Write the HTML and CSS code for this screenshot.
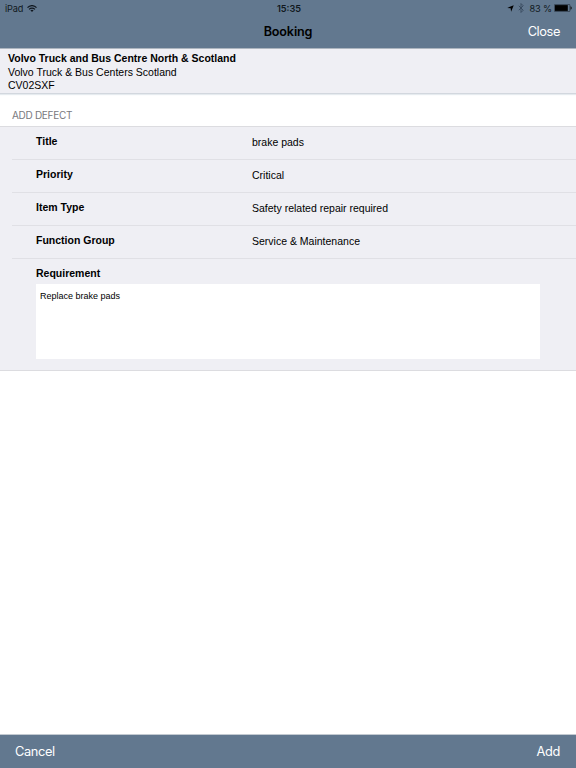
FILE: index.html
```html
<!DOCTYPE html>
<html lang="en">
<head>
    <meta charset="UTF-8">
    <meta name="viewport" content="width=device-width, initial-scale=1.0">
    <title>Booking</title>
    <link rel="stylesheet" href="styles.css">
</head>
<body>
    <header class="top">
        <div class="status-bar">
            <div class="status-left">
                <span>iPad</span>
                <svg class="wifi" viewBox="0 0 20 14" fill="none" stroke="#111820" stroke-width="2.4">
                    <path d="M1 5.2C6-.2 14-.2 19 5.2"/>
                    <path d="M4.2 8.6c3.3-3.4 8.3-3.4 11.6 0"/>
                    <path d="M10 13.8L6.7 10.6c1.9-1.8 4.7-1.8 6.6 0z" fill="#111820" stroke="none"/>
                </svg>
            </div>
            <span class="clock">15:35</span>
            <div class="status-right">
                <svg class="location" viewBox="0 0 14 14"><path d="M13.5.5L8.2 13.5 7.3 6.7.5 5.8z" fill="#000"/></svg>
                <svg class="bluetooth" viewBox="0 0 10 18" fill="none" stroke="#35465a" stroke-width="1.5"><path d="M1 5l8 8-4 4V1l4 4-8 8"/></svg>
                <span class="percent">83 %</span>
                <svg class="battery" viewBox="0 0 36 16">
                    <rect x=".8" y=".8" width="31" height="14.4" rx="1.5" fill="none" stroke="#26323f" stroke-width="1.4"/>
                    <rect x="2" y="2.2" width="25.6" height="11.6" fill="#000"/>
                    <path d="M33 4.5v7c3.4-1 3.4-6 0-7z" fill="#111"/>
                </svg>
            </div>
        </div>
        <nav class="nav-bar">
            <span class="nav-title">Booking</span>
            <a class="nav-close">Close</a>
        </nav>
    </header>

    <section class="dealer">
        <div class="dealer-name">Volvo Truck and Bus Centre North &amp; Scotland</div>
        <div class="dealer-branch">Volvo Truck &amp; Bus Centers Scotland</div>
        <div class="dealer-reg">CV02SXF</div>
    </section>

    <main class="content">
        <h2 class="section-title">ADD DEFECT</h2>
        <div class="form">
            <div class="row">
                <span class="label">Title</span>
                <span class="value">brake pads</span>
            </div>
            <div class="row">
                <span class="label">Priority</span>
                <span class="value">Critical</span>
            </div>
            <div class="row">
                <span class="label">Item Type</span>
                <span class="value">Safety related repair required</span>
            </div>
            <div class="row">
                <span class="label">Function Group</span>
                <span class="value">Service &amp; Maintenance</span>
            </div>
            <div class="requirement">
                <span class="label">Requirement</span>
                <div class="note">Replace brake pads</div>
            </div>
        </div>
    </main>

    <footer class="toolbar">
        <a class="cancel">Cancel</a>
        <a class="add">Add</a>
    </footer>
</body>
</html>
```

FILE: styles.css
```css
* {
    box-sizing: border-box;
}

body {
    margin: 0;
    height: 100vh;
    display: flex;
    flex-direction: column;
    overflow: hidden;
    background: #fff;
    color: #000;
    font-family: "Liberation Sans", Arial, sans-serif;
    font-size: 10.5px;
}

.top {
    height: 49px;
    background: #62788f;
    border-bottom: 1px solid #adb5bf;
}

.status-bar {
    display: grid;
    grid-template-columns: 1fr auto 1fr;
    align-items: center;
    height: 16px;
    padding: 0 4px 0 5px;
    font-family: Inter, sans-serif;
    font-size: 9.2px;
    line-height: 11px;
    color: #111820;
}

.status-left,
.status-right {
    display: flex;
    align-items: center;
}

.status-left {
    letter-spacing: -0.15px;
}

.status-right {
    justify-content: flex-end;
}

.wifi {
    width: 10px;
    height: 7px;
    margin-left: 4px;
}

.clock {
    margin-left: 1px;
    font-weight: 600;
}

.location {
    width: 7px;
    height: 7px;
}

.bluetooth {
    width: 6px;
    height: 10px;
    margin: 0 5px 0 4px;
}

.percent {
    letter-spacing: -0.1px;
}

.battery {
    width: 18px;
    height: 8px;
    margin-left: 2px;
}

.nav-bar {
    display: grid;
    grid-template-columns: 1fr auto 1fr;
    align-items: center;
    height: 31px;
    padding: 0 16px;
    font-family: Inter, sans-serif;
    font-size: 12.8px;
    letter-spacing: -0.4px;
}

.nav-title {
    grid-column: 2;
    font-size: 12.6px;
    font-weight: 600;
    letter-spacing: -0.15px;
}

.nav-close {
    justify-self: end;
    color: #fff;
}

.dealer {
    height: 45px;
    padding: 2px 8px 0;
    background: #efeff4;
    border-bottom: 1px solid #d2d7de;
    box-shadow: 0 1px 1px #e6ebef;
    line-height: 13px;
}

.dealer-name {
    font-weight: bold;
    line-height: 15px;
}

.content {
    flex: 1;
}

.section-title {
    display: flex;
    align-items: flex-end;
    height: 32px;
    margin: 0;
    padding: 0 12px 4px;
    font-family: Inter, sans-serif;
    font-size: 10px;
    line-height: 13px;
    font-weight: normal;
    letter-spacing: -0.3px;
    color: #78787d;
}

.form {
    height: 245px;
    background: #efeff4;
    border-top: 1px solid #dcdce0;
    border-bottom: 1px solid #dcdce0;
}

.row {
    display: grid;
    grid-template-columns: 216px 1fr;
    height: 33px;
    margin-left: 12px;
    padding: 8px 0 0 24px;
    border-bottom: 1px solid #e0e0e5;
    line-height: 13px;
}

.label {
    font-weight: bold;
}

.value {
    padding-top: 1px;
}

.requirement {
    padding: 8px 36px 0;
    line-height: 13px;
}

.note {
    height: 75px;
    margin-top: 4px;
    padding: 6px 4px;
    background: #fff;
    font-size: 9px;
}

.toolbar {
    display: flex;
    justify-content: space-between;
    align-items: center;
    height: 34px;
    padding: 0 16px 0 15px;
    background: #62788f;
    border-top: 1px solid #c3cad1;
    font-family: Inter, sans-serif;
    font-size: 12.8px;
    letter-spacing: -0.35px;
    color: #fff;
}
```
